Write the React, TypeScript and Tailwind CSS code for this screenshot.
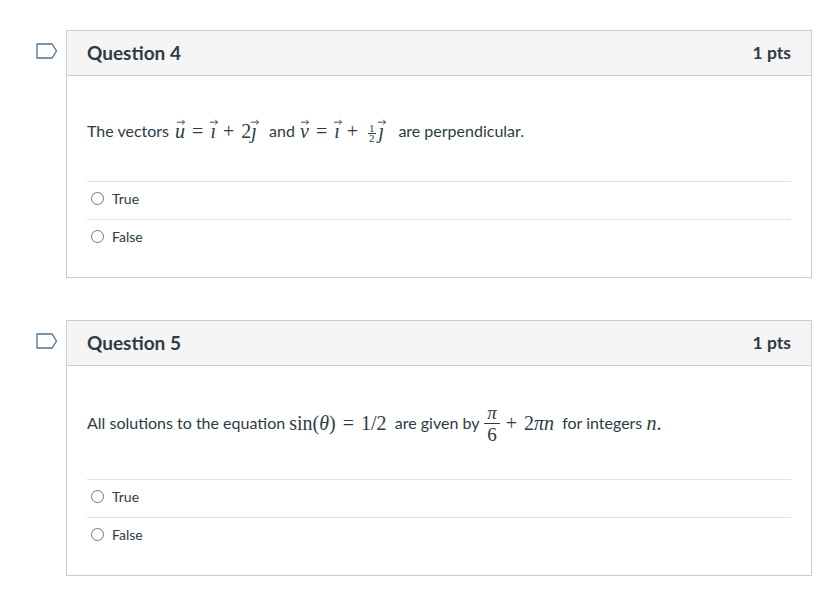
import React from 'react';

const serif = { fontFamily: '"Liberation Serif", "DejaVu Serif", serif' };

const Arrow = () => (
	<svg width="9" height="6" viewBox="0 0 9 6" className="absolute left-1/2 top-[0px] -translate-x-[40%]">
		<path d="M0.5 3.2 H8 M5.8 1 L8.3 3.2 L5.8 5.4" fill="none" stroke="#2d3b45" strokeWidth="0.9" />
	</svg>
);

const Vec = ({ children }: { children: React.ReactNode }) => (
	<span className="relative inline-block italic leading-[24px]">
		<Arrow />
		{children}
	</span>
);

const Op = ({ children }: { children: React.ReactNode }) => (
	<span className="mx-[7px]">{children}</span>
);

const Flag = () => (
	<svg width="22" height="16" viewBox="0 0 22 16" className="block">
		<path
			d="M1 1 H16 L20.5 8 L16 15 H1 Z"
			fill="none"
			stroke="#4b7390"
			strokeWidth="1.3"
		/>
	</svg>
);

const Option = ({ label }: { label: string }) => (
	<label className="flex items-center h-[38px] pb-[5px] border-t border-[#dfe2e5] text-[14px] text-[#2d3b45]">
		<span className="ml-[4px] mr-[8px] w-[13px] h-[13px] rounded-full border border-[#6b7780] bg-white" />
		{label}
	</label>
);

type QuestionProps = {
	num: number;
	children: React.ReactNode;
	bodyClass: string;
};

const Question = ({ num, children, bodyClass }: QuestionProps) => (
	<div className="flex">
		<div className="w-[66px] shrink-0 pt-[13px] pl-[36px]">
			<Flag />
		</div>
		<div className="w-[746px] border border-[#c7cdd1] bg-white">
			<div className="flex items-center justify-between h-[45px] px-[20px] bg-[#f5f5f5] border-b border-[#c7cdd1]">
				<span className="text-[19px] font-bold text-[#2d3b45]">Question {num}</span>
				<span className="text-[17.5px] font-bold text-[#2d3b45]">1 pts</span>
			</div>
			<div className={`px-[20px] pb-[20px] ${bodyClass}`}>
				{children}
				<div>
					<Option label="True" />
					<Option label="False" />
				</div>
			</div>
		</div>
	</div>
);

export default function App() {
	return (
		<div
			className="w-[833px] h-[594px] bg-white pt-[30px] text-[#2d3b45]"
			style={{ fontFamily: 'Lato, "Liberation Sans", sans-serif' }}
		>
			<Question num={4} bodyClass="pt-[42px]">
				<p className="flex items-center text-[16px] h-[63px] pb-[37px] whitespace-pre">
					<span>The vectors </span>
					<span className="text-[20px] ml-[2px]" style={serif}>
						<Vec>u</Vec>
						<Op>=</Op>
						<Vec>ı</Vec>
						<Op>+</Op>2<Vec>ȷ</Vec>
					</span>
					<span>   and </span>
					<span className="text-[20px] ml-[1px]" style={serif}>
						<Vec>v</Vec>
						<Op>=</Op>
						<Vec>ı</Vec>
						<Op>+</Op>
						<span className="inline-flex flex-col items-center align-middle text-[11px] leading-[9px] px-[3px]">
							<span className="border-b-[0.5px] border-[#2d3b45] px-[1px]">1</span>
							<span>2</span>
						</span>
						<Vec>ȷ</Vec>
					</span>
					<span className="ml-[2px]">   are perpendicular.</span>
				</p>
			</Question>
			<div className="h-[42px]" />
			<Question num={5} bodyClass="pt-[37px]">
				<p className="flex items-center text-[16px] h-[76px] pb-[36px] whitespace-pre">
					<span>All solutions to the equation </span>
					<span className="text-[20px]" style={serif}>
						sin(<i>θ</i>)<Op>=</Op>1/2
					</span>
					<span>  are given by </span>
					<span className="inline-flex flex-col items-center text-[19px] leading-[21px] mx-[1px]" style={serif}>
						<i className="px-[2px]">π</i>
						<span className="border-t border-[#2d3b45] px-[3px]">6</span>
					</span>
					<span className="text-[20px] -ml-[2px]" style={serif}>
						<Op>+</Op>2<i>πn</i>
					</span>
					<span>  for integers </span>
					<span className="text-[20px]" style={serif}>
						<i>n</i>.
					</span>
				</p>
			</Question>
		</div>
	);
}
